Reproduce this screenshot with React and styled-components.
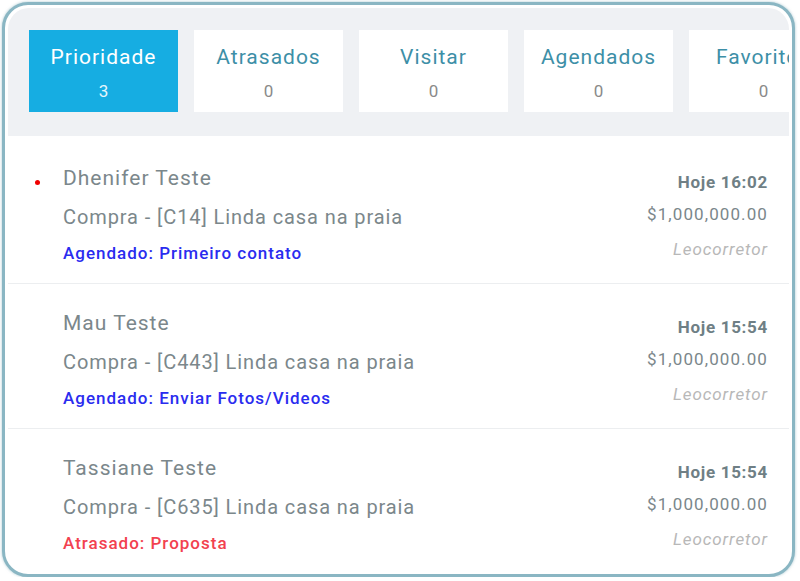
import React from "react";
import styled, { createGlobalStyle } from "styled-components";

const GlobalStyle = createGlobalStyle`
  html, body {
    margin: 0;
    padding: 0;
    background: #ffffff;
    font-family: Roboto, "Liberation Sans", Arial, sans-serif;
  }
  * { box-sizing: border-box; }
`;

const Frame = styled.div`
  width: 793px;
  height: 575px;
  margin: 2px 0 0 2px;
  border: 3px solid #8ab6c3;
  border-radius: 26px;
  padding: 3px;
  background: #ffffff;
  box-shadow: 0 0 3px rgba(110, 160, 175, 0.6);
  overflow: hidden;
`;

const Inner = styled.div`
  height: 100%;
  border-radius: 21px 21px 20px 20px;
  overflow: hidden;
  display: flex;
  flex-direction: column;
`;

const TabBar = styled.div`
  display: flex;
  gap: 16px;
  padding: 22px 0 24px 21px;
  background: #eff1f4;
  overflow: hidden;
  flex-shrink: 0;
`;

const Tab = styled.div`
  flex: 0 0 149px;
  height: 82px;
  padding-top: 13px;
  display: flex;
  flex-direction: column;
  align-items: center;
  background: ${(p) => (p.$active ? "#16ade2" : "#ffffff")};
`;

const TabLabel = styled.div`
  font-size: 21px;
  line-height: 28px;
  letter-spacing: 1px;
  color: ${(p) => (p.$active ? "#ffffff" : "#3d8fa7")};
  white-space: nowrap;
`;

const TabCount = styled.div`
  margin-top: 6px;
  font-size: 17px;
  line-height: 28px;
  color: ${(p) => (p.$active ? "#e6f6fc" : "#8a8a8a")};
`;

const List = styled.div`
  padding-top: 3px;
  background: #ffffff;
`;

const Item = styled.div`
  display: grid;
  grid-template-columns: 1fr auto;
  padding: 21px 21px 15px 55px;
  border-bottom: 1px solid #eceef0;
  &:last-child { border-bottom: none; }
`;

const Left = styled.div`
  display: flex;
  flex-direction: column;
`;

const Name = styled.div`
  position: relative;
  font-size: 21px;
  line-height: 36px;
  letter-spacing: 1px;
  color: #7b878b;
  &::before {
    content: "";
    display: ${(p) => (p.$unread ? "block" : "none")};
    position: absolute;
    left: -28px;
    top: 20px;
    width: 5px;
    height: 5px;
    border-radius: 50%;
    background: #f00000;
  }
`;

const Offer = styled.div`
  font-size: 20px;
  line-height: 42px;
  letter-spacing: 0.9px;
  color: #7b878b;
`;

const Status = styled.div`
  font-size: 17px;
  line-height: 30px;
  letter-spacing: 1px;
  font-weight: 500;
  color: ${(p) => (p.$late ? "#f2414f" : "#2a2cef")};
`;

const Right = styled.div`
  display: flex;
  flex-direction: column;
  align-items: flex-end;
  padding-top: 6px;
`;

const When = styled.div`
  font-size: 17px;
  line-height: 32px;
  letter-spacing: 0.7px;
  font-weight: 700;
  color: #6f7f85;
`;

const Price = styled.div`
  font-size: 17px;
  line-height: 32px;
  letter-spacing: 1.1px;
  color: #7b878b;
`;

const Agent = styled.div`
  font-size: 17px;
  line-height: 38px;
  letter-spacing: 0.9px;
  font-style: italic;
  color: #b8b8b8;
`;

const tabs = [
  { label: "Prioridade", count: 3, active: true },
  { label: "Atrasados", count: 0 },
  { label: "Visitar", count: 0 },
  { label: "Agendados", count: 0 },
  { label: "Favoritos", count: 0 },
];

const leads = [
  {
    name: "Dhenifer Teste",
    offer: "Compra - [C14] Linda casa na praia",
    status: "Agendado: Primeiro contato",
    when: "Hoje 16:02",
    unread: true,
  },
  {
    name: "Mau Teste",
    offer: "Compra - [C443] Linda casa na praia",
    status: "Agendado: Enviar Fotos/Videos",
    when: "Hoje 15:54",
  },
  {
    name: "Tassiane Teste",
    offer: "Compra - [C635] Linda casa na praia",
    status: "Atrasado: Proposta",
    when: "Hoje 15:54",
    late: true,
  },
];

export default function App() {
  return (
    <>
      <GlobalStyle />
      <Frame>
        <Inner>
          <TabBar>
            {tabs.map((t) => (
              <Tab key={t.label} $active={t.active}>
                <TabLabel $active={t.active}>{t.label}</TabLabel>
                <TabCount $active={t.active}>{t.count}</TabCount>
              </Tab>
            ))}
          </TabBar>
          <List>
            {leads.map((l) => (
              <Item key={l.name}>
                <Left>
                  <Name $unread={l.unread}>{l.name}</Name>
                  <Offer>{l.offer}</Offer>
                  <Status $late={l.late}>{l.status}</Status>
                </Left>
                <Right>
                  <When>{l.when}</When>
                  <Price>$1,000,000.00</Price>
                  <Agent>Leocorretor</Agent>
                </Right>
              </Item>
            ))}
          </List>
        </Inner>
      </Frame>
    </>
  );
}
